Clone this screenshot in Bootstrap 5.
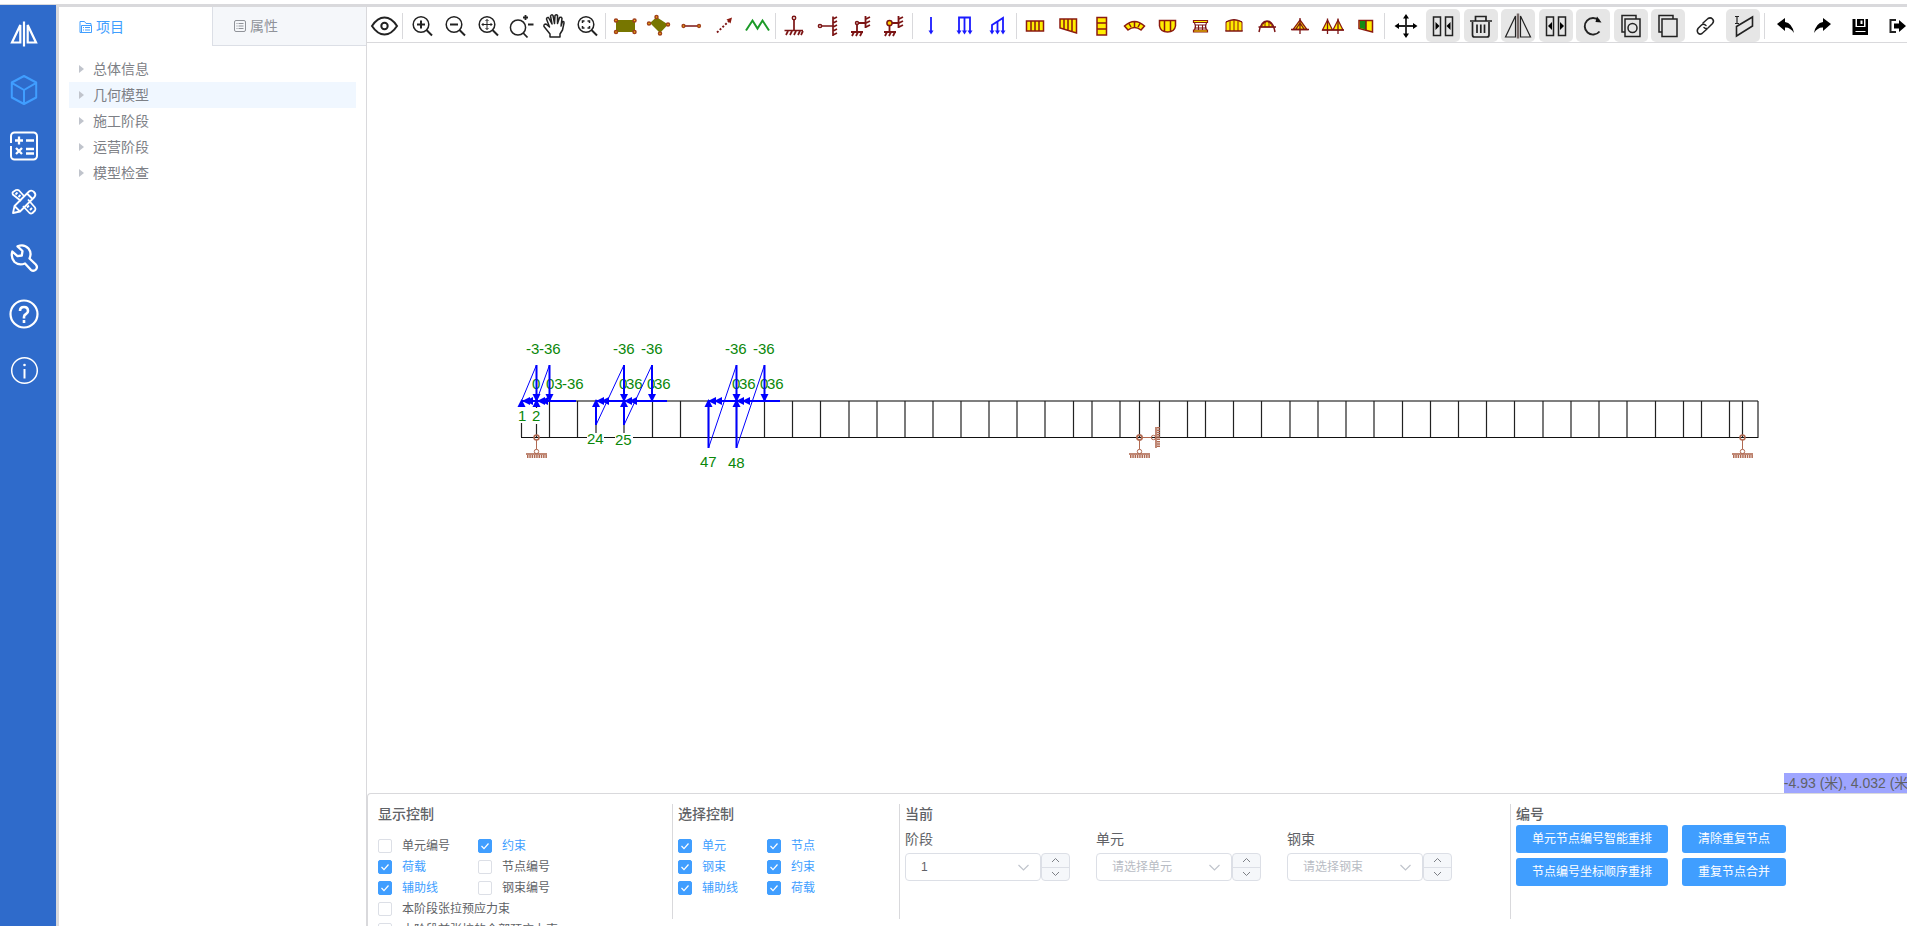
<!DOCTYPE html>
<html lang="zh-CN">
<head>
<meta charset="utf-8">
<meta name="viewport" content="width=device-width, initial-scale=1">
<title>桥梁模型</title>
<link rel="stylesheet" href="https://cdn.jsdelivr.net/npm/bootstrap@5.3.0/dist/css/bootstrap.min.css">
<style>
body{font-family:"Liberation Sans","Noto Sans CJK SC",sans-serif;font-size:14px;line-height:20px;color:#606266;background:#fff}
.topline{height:3px;margin-top:4px;background:#d9d9dc}
.body-row{min-height:0}
.side{width:56px;background:#2f6bcb;margin-top:-2px;padding-top:1px}
.side a{height:56px;padding-right:8px;color:#fff}
.side a.on{color:#409eff}
.side svg{width:32px;height:32px}
.tree{width:310px;border-left:3px solid #d9d9dc}
.tree .tabs{height:39px;display:grid;grid-template-columns:153px 1fr}
.tree .tabs button{border:0;background:#fff;color:#409eff;padding:0 20px;text-align:left}
.tree .tabs button+button{background:#f5f7fa;color:#909399;border-left:1px solid #dcdfe6;border-bottom:1px solid #dcdfe6}
.tree .tabs svg{width:14px;height:14px;margin-right:3px;flex:none}
.nodes{padding:10px}
.nodes a{height:26px;padding-left:10px;color:#7d8086;text-decoration:none}
.nodes a.on{background:#f0f7ff}
.nodes a::before{content:"";border:4px solid transparent;border-left:5px solid #c0c4cc;border-right:0;margin-right:9px}
.work{border-left:1px solid #d9d9dc}
.tools{height:36px;padding-top:2px;border-bottom:1px solid #d9d9dc}
.tools button{border:0;background:none;padding:0;width:33px;height:33px;flex:none;display:flex;align-items:center;justify-content:center}
.tools svg{width:30px;height:30px;flex:none;stroke-width:1.5}
.tools .rule{width:1px;height:26px;margin:4px 2px;background:#d9d9dc;flex:none}
.tools .wide{display:grid;flex:none;justify-items:center}
.tools .edit{width:375px;grid-template-columns:repeat(10,1fr)}
.tools .file{width:150px;grid-template-columns:repeat(4,1fr)}
.tools .wide button{width:34px;border-radius:5px}
.tools button.off{background:#e6e6e6}
.k{fill:none;stroke:#222}
.m{fill:none;stroke:#7b1414}
.y{fill:#ffee00;stroke:#8b1a10}
.o{fill:#ffc000;stroke:#a0401c}
.b{fill:none;stroke:#1a1aff}
.bf{fill:#1a1aff}
.stage{min-height:0}
.stage text{font:15px "Liberation Sans",sans-serif;fill:#0a870a}
.coord{right:-6px;bottom:0;background:#9ea5ff;color:#606266;white-space:nowrap}
.panel{height:133px;border-top:1px solid #d9d9dc;border-left:1px solid #d9d9dc;border-top-left-radius:4px;display:grid;grid-template-columns:304fr 227fr 611fr 397fr;padding-top:10px}
.panel section{height:115px;padding-left:5px}
.panel section+section{border-left:1px solid #d9d9dc}
.panel section:first-child{padding-left:10px}
.panel h2{font-size:14px;line-height:20px;margin:0}
.checks{display:grid;grid-template-columns:100px 1fr;margin-top:11px;font-size:12px}
.checks.near{grid-template-columns:89px 1fr}
.checks .all{grid-column:1/3}
.checks label{height:21px;display:flex;align-items:center;white-space:nowrap}
.checks input.form-check-input{width:14px;height:14px;margin:0 10px 0 0;border-color:#dcdfe6;border-radius:2px;flex:none}
.checks input:checked{background-color:#409eff;border-color:#409eff}
.checks input.form-check-input:checked{background-size:12px;background-image:url("data:image/svg+xml,%3Csvg xmlns='http://www.w3.org/2000/svg' viewBox='0 0 12 12'%3E%3Cpath d='M2.500 6l2.500 2.700L9.500 3.500' fill='none' stroke='%23fff' stroke-width='1.200'/%3E%3C/svg%3E")}
.checks label:has(input:checked){color:#409eff}
.field{width:165px}
.picks{gap:26px}
.field label{font-size:14px;line-height:20px;margin:5px 0 4px;display:block}
.field select{width:136px;height:28px;font-size:12px;line-height:16px;padding:0 15px;border-color:#dcdfe6;border-radius:4px;color:#606266;background-color:#fff;background-position:right 10px center;background-size:13px;background-image:url("data:image/svg+xml,%3Csvg xmlns='http://www.w3.org/2000/svg' viewBox='0 0 13 13'%3E%3Cpath d='M1.500 4l5 5 5-5' fill='none' stroke='%23c0c4cc' stroke-width='1.200'/%3E%3C/svg%3E")}
.field select.none{color:#b8bcc4}
.spin{width:29px;height:28px;border:1px solid #dcdfe6;border-radius:4px;background:#f5f7fa;overflow:hidden}
.spin button{border:0;background:none;padding:0;height:13px;display:flex;align-items:center;justify-content:center}
.spin button+button{border-top:1px solid #dcdfe6;padding-bottom:2px}
.spin svg{width:9px;height:9px;fill:none;stroke:#7d8086}
.acts{display:grid;grid-template-columns:152px 104px;column-gap:14px;row-gap:5px;margin-top:1px}
.acts .btn{height:28px;padding:0;font-size:12px;border-radius:3px;background:#409eff;border:0;color:#fff}
</style>
</head>
<body>
<div class="vh-100 d-flex flex-column overflow-hidden">
<div class="topline flex-shrink-0"></div>
<div class="body-row d-flex flex-grow-1">

<nav class="side d-flex flex-column flex-shrink-0">
<a href="#" aria-label="主页" class="d-flex align-items-center justify-content-center"><svg viewBox="0 0 32 32" fill="none" stroke="currentColor" stroke-width="2"><path d="M16 3.500V28.500M12.300 7V24.500H4zM19.700 7V24.500H28z" stroke-width="2.200"/></svg></a>
<a href="#" aria-label="模型" class="d-flex align-items-center justify-content-center on"><svg viewBox="0 0 32 32" fill="none" stroke="currentColor" stroke-width="2" stroke-linejoin="round"><path d="M16 2L28.200 8.500V23.500L16 30L3.800 23.500V8.500zM3.800 8.800L16 16L28.200 8.800M16 16V30"/></svg></a>
<a href="#" aria-label="计算" class="d-flex align-items-center justify-content-center"><svg viewBox="0 0 32 32" fill="none" stroke="currentColor" stroke-width="2"><path d="M3 13V6a3.500 3.500 0 0 1 3.500-3.500h19A3.500 3.500 0 0 1 29 6v20a3.500 3.500 0 0 1-3.500 3.500h-19A3.500 3.500 0 0 1 3 26V16"/><path d="M7 10.500h8M11 6.500v8M18 10.500h8M8 18l6 6M14 18l-6 6M18 19h8M18 23.500h8" stroke-width="2.300"/></svg></a>
<a href="#" aria-label="设计" class="d-flex align-items-center justify-content-center"><svg viewBox="0 0 32 32" fill="none" stroke="currentColor" stroke-width="1.800" stroke-linejoin="round"><path d="M13 15L4.800 8.500Q4 7 5 6L8 4Q10 3.500 11 4.500L16 10M20 13.500L27 21.500Q28 23 27 24.500L24.500 27Q23 28 21.500 27L15 20M7.500 8.500l2-2M10.500 11l2-2M19 21.500l2-2M22 24l2-2"/><path d="M5 27L6.500 20L21 5.500Q23.500 3.500 26 6T26.500 11L12 25.500zM19 7.500L24.500 13M7 20.500l4.500 4.500"/></svg></a>
<a href="#" aria-label="工具" class="d-flex align-items-center justify-content-center"><svg viewBox="0 0 32 32" fill="none" stroke="currentColor" stroke-width="2.300" stroke-linejoin="round"><path d="M9.500 4.300Q16 1.500 20.500 6.500Q24 11 21.500 16.500L27.800 22.500Q30 25 28 27.500Q25.500 29.800 22.800 27.800L17 21.500Q11 24 6.500 20Q2.500 15.500 4.300 9.500L9.500 14.200L13.800 13.500L14.500 9z"/></svg></a>
<a href="#" aria-label="帮助" class="d-flex align-items-center justify-content-center"><svg viewBox="0 0 32 32" fill="none" stroke="currentColor" stroke-width="2"><circle cx="16" cy="16" r="13.500" stroke-width="2.200"/><path d="M12 13Q12 9 16 9T20 13Q20 15 18 16T16 19V20.500M16 22v3" stroke-width="2.600"/></svg></a>
<a href="#" aria-label="关于" class="d-flex align-items-center justify-content-center"><svg viewBox="0 0 32 32" fill="none" stroke="currentColor" stroke-width="1.500"><circle cx="16.500" cy="16.500" r="12.800"/><path d="M16.500 15v9.500" stroke-width="2"/><circle cx="16.500" cy="11" r="1.300" fill="currentColor" stroke="none"/></svg></a>
</nav>

<aside class="tree flex-shrink-0">
<div class="tabs">
<button type="button" class="d-flex align-items-center"><svg viewBox="0 0 14 14" fill="none" stroke="currentColor"><path d="M1 12.500V1.500h4.500l1.500 2h5v2M1 12.500h11.500v-7H2.500V12M4 7.500h1M6 7.500h5M4 10h1M6 10h5"/></svg>项目</button>
<button type="button" class="d-flex align-items-center"><svg viewBox="0 0 14 14" fill="none" stroke="currentColor"><rect x="1.500" y="1.500" width="11" height="11" rx="1.500"/><path d="M3.500 4.500h1M5.500 4.500h5M3.500 7h1M5.500 7h5M3.500 9.500h1M5.500 9.500h5"/></svg>属性</button>
</div>
<div class="nodes d-flex flex-column">
<a href="#" class="d-flex align-items-center">总体信息</a>
<a href="#" class="d-flex align-items-center on">几何模型</a>
<a href="#" class="d-flex align-items-center">施工阶段</a>
<a href="#" class="d-flex align-items-center">运营阶段</a>
<a href="#" class="d-flex align-items-center">模型检查</a>
</div>
</aside>

<main class="work d-flex flex-column flex-grow-1 overflow-hidden">
<div class="tools d-flex flex-shrink-0 overflow-hidden">
<button aria-label="显示"><svg viewBox="0 0 30 30" class="k"><g stroke-width="2"><path d="M3 15Q8.500 6.500 15.500 6.500T28 15Q22.500 23.500 15.500 23.500T3 15z"/><circle cx="15.500" cy="15" r="3.200"/></g></svg></button>
<span class="rule"></span>
<button aria-label="放大"><svg viewBox="0 0 30 30" class="k"><circle cx="14" cy="13.500" r="7.800"/><path d="M19.500 19L25 24.500M10 13.500h8M14 9.500v8" stroke-width="2"/></svg></button>
<button aria-label="缩小"><svg viewBox="0 0 30 30" class="k"><circle cx="14" cy="13.500" r="7.800"/><path d="M19.500 19L25 24.500M10 13.500h8" stroke-width="2"/></svg></button>
<button aria-label="平移缩放"><svg viewBox="0 0 30 30" class="k"><circle cx="14" cy="13.500" r="7.800"/><path d="M19.500 19L25 24.500" stroke-width="2"/><path d="M9 13.500h10M14 8.500v10M12.500 10L14 8.500L15.500 10M12.500 17l1.500 1.500L15.500 17M10.500 12L9 13.500L10.500 15M17.500 12L19 13.500L17.500 15" stroke-width="1"/></svg></button>
<button aria-label="动态缩放"><svg viewBox="0 0 30 30" class="k"><circle cx="12" cy="16.500" r="7.600"/><path d="M17.200 22L21.500 26.500M17 6.500h5M19.500 4v5M22 13.500h5.500" stroke-width="1.800"/></svg></button>
<button aria-label="平移"><svg viewBox="0 0 30 30" class="k"><path d="M11 26V23L5 15.500Q4.500 13 7 13L10.500 16L7.500 8Q8 6 9.500 6.500L13 13L11.500 5Q12.500 3 14 4.500L15.500 12.500L16 4.500Q17.500 3 18.500 4.500V12.500L20.500 6.500Q22.500 5.500 23 7.500L22 15L23.500 10.500Q25 10 25 12L23.500 19L21 23V26z" stroke-linejoin="round"/></svg></button>
<button aria-label="全图"><svg viewBox="0 0 30 30" class="k"><circle cx="14" cy="13.500" r="7.800"/><path d="M19.500 19L25 24.500" stroke-width="2"/><path d="M10.500 12V10h2M15.500 10h2V12M10.500 15v2h2M15.500 17h2V15"/></svg></button>
<span class="rule"></span>
<button aria-label="矩形"><svg viewBox="0 0 30 30" stroke-width="1"><path d="M6 9h19v12H6z" fill="#777600"/><circle class="o" cx="6" cy="9.500" r="1.500"/><circle class="o" cx="24.500" cy="9.500" r="1.500"/><circle class="o" cx="6" cy="21" r="1.500"/><circle class="o" cx="24.500" cy="21" r="1.500"/></svg></button>
<button aria-label="多边形"><svg viewBox="0 0 30 30"><path d="M7 12L13.500 6L25 13.500L17 22z" fill="#777600"/><circle class="o" cx="6" cy="12.500" r="1.500"/><circle class="o" cx="13.500" cy="6" r="1.500"/><circle class="o" cx="25" cy="13.500" r="1.500"/><circle class="o" cx="17" cy="22.500" r="1.500"/></svg></button>
<button aria-label="线单元"><svg viewBox="0 0 30 30"><path class="m" d="M7 15h16"/><circle class="o" cx="7.500" cy="15" r="1.400"/><circle class="o" cx="23" cy="15" r="1.400"/></svg></button>
<button aria-label="矢量"><svg viewBox="0 0 30 30"><path class="m" d="M8 21.500L20 10" stroke-dasharray="2 1.800" stroke-width="1.900"/><path d="M23 6.500L17.500 8.500L21.500 12.500z" fill="#8b1a10"/></svg></button>
<button aria-label="折线"><svg viewBox="0 0 30 30"><path d="M4 19.500L10.500 9.500L15.500 17.500L20.500 9.500L27 19.500" fill="none" stroke="#1c9a28" stroke-width="2"/></svg></button>
<span class="rule"></span>
<button aria-label="竖向支座"><svg viewBox="0 0 30 30" class="m"><circle cx="14" cy="7" r="1.700"/><path d="M14 9V19.500M4.500 19.500H23M8 20l-2 4M12 20l-2 4M16 20l-2 4M20 20l-2 4M23 20l-2 4" stroke-width="1.700"/></svg></button>
<button aria-label="水平支座"><svg viewBox="0 0 30 30" class="m"><circle cx="7" cy="15" r="1.600"/><path d="M9 15H20M20 5.500V25M20 8l4-2M20 12l4-2M20 16l4-2M20 20l4-2M20 24l4-2" stroke-width="1.700"/></svg></button>
<button aria-label="双向支座"><svg viewBox="0 0 30 30" class="m"><circle cx="11" cy="12" r="1.500"/><path d="M12.500 12H20M11 13.500V21M5 21H17M8 21l-2 4M12 21l-2 4M16 21l-2 4M19.500 5v12M20 8l4-2M20 12l4-2M20 16l4-2" stroke-width="1.800"/></svg></button>
<button aria-label="固定支座"><svg viewBox="0 0 30 30" class="m"><path d="M12 12H20M10.500 13.500V21M5 21H17M8 21l-2 4M12 21l-2 4M16 21l-2 4M19.500 5v12M20 8l4-2M20 12l4-2M20 16l4-2" stroke-width="1.800"/><circle cx="10.500" cy="12" r="2.600" fill="#ffcf00"/></svg></button>
<span class="rule"></span>
<button aria-label="集中力"><svg viewBox="0 0 30 30"><path class="b" d="M14 6v15" stroke-width="1.800"/><path class="bf" d="M11.500 19.500h5L14 23.500z"/></svg></button>
<button aria-label="均布力"><svg viewBox="0 0 30 30"><path class="b" d="M9 21V6.500H20V21M14.500 6.500V21" stroke-width="1.800"/><path class="bf" d="M6.500 19.500h5L9 23.500zM12 19.500h5l-2.500 4zM17.500 19.500h5L20 23.500z"/></svg></button>
<button aria-label="梯形力"><svg viewBox="0 0 30 30"><path class="b" d="M9 21V14L20 7V21M14.500 10.500V21" stroke-width="1.800"/><path class="bf" d="M6.500 19.500h5L9 23.500zM12 19.500h5l-2.500 4zM17.500 19.500h5L20 23.500z"/></svg></button>
<span class="rule"></span>
<button aria-label="等截面梁"><svg viewBox="0 0 30 30"><path class="y" d="M5.500 10H22.500V20H5.500zM10 10V20M14 10V20M18 10V20"/></svg></button>
<button aria-label="变截面梁"><svg viewBox="0 0 30 30"><path class="y" d="M6 8H22.500V22L6 17zM10 8V18M14 8V19.500M18 8V20.500"/></svg></button>
<button aria-label="墩柱"><svg viewBox="0 0 30 30"><path class="y" d="M10 6.500H19.500V24H10zM10 12h9.500M10 18h9.500"/></svg></button>
<button aria-label="拱圈"><svg viewBox="0 0 30 30"><path class="y" d="M4.500 15Q14.500 6 24.500 15L21 19Q14.500 14 8 19zM9 12.500L11 16M14.500 11V16M20 12.500L18 16"/></svg></button>
<button aria-label="盖梁"><svg viewBox="0 0 30 30"><path class="y" d="M6.500 9.500H22.500V15Q21.500 21 14.500 21T6.500 15zM11.500 9.500V20M17.500 9.500V20"/></svg></button>
<button aria-label="框架"><svg viewBox="0 0 30 30"><path class="y" stroke-width="1.200" d="M7.500 9.500H21.500V11.500H7.500zM7.500 19H21.500V21H7.500z"/><path class="m" stroke-width="1.100" d="M8.500 12Q10.500 15.500 8.500 19M20.500 12Q18.500 15.500 20.500 19M9.500 14H19.500M9.500 17H19.500M12.500 14v5M16.500 14v5"/></svg></button>
<button aria-label="拱桥"><svg viewBox="0 0 30 30"><path class="y" d="M7 20V11Q15 7 23 11V20zM11 10V20M15 9V20M19 10V20" stroke-width="1"/><path d="M7 11Q15 6 23 11M6 20H24" class="m" stroke-width="1.200"/></svg></button>
<button aria-label="中承拱"><svg viewBox="0 0 30 30"><path class="y" d="M9 16Q15 5 21 16zM13 11v5M17 11v5" stroke-width="1"/><path class="m" d="M7 21Q9 10 15 10T23 21M6.500 16H24"/></svg></button>
<button aria-label="斜拉桥"><svg viewBox="0 0 30 30"><path class="y" d="M15 9L22 18.500H8z" stroke-width="1.300"/><path class="m" d="M15 7V23M6 18.500H24M15 12L11 18M15 12L19 18" stroke-width="1.300"/></svg></button>
<button aria-label="双塔斜拉桥"><svg viewBox="0 0 30 30"><path class="y" d="M9.500 9L14.500 19H4.500zM20 9L25 19H15z" stroke-width="1.200"/><path class="m" d="M9.500 7.500V23M20 7.500V23M4 19H26" stroke-width="1.300"/></svg></button>
<button aria-label="截面"><svg viewBox="0 0 30 30"><path class="y" d="M8 9.500H21.500V21L8 17.500z"/><path d="M9 10H15V18.500L9 17z" fill="#138a13"/><path class="m" d="M15 9.500V19"/></svg></button>
<span class="rule"></span>
<div class="wide edit">
<button aria-label="移动"><svg viewBox="0 0 30 30"><path class="k" d="M15 6V24M6 15H24" stroke-width="1.800"/><path d="M15 3L18 7.500H12zM15 27L18 22.500H12zM3.500 15L8 12V18zM26.500 15L22 12V18z"/></svg></button>
<button class="off" aria-label="合并"><svg viewBox="0 0 30 30"><path class="k" d="M5.500 6H12.500V24.500H5.500zM17.500 6H24.500V24.500H17.500z"/><path d="M7.500 11V19L11.500 15zM22.500 11V19L18.500 15z"/></svg></button>
<button class="off" aria-label="删除"><svg viewBox="0 0 30 30"><path class="k" d="M4 10H26M9.500 9.500V5.500H20V9.500M6.500 11V24Q6.500 26 8.500 26H21Q23 26 23 24V11M11 13.500V22M14.800 13.500V22M18.500 13.500V22" stroke-width="1.700"/></svg></button>
<button class="off" aria-label="镜像"><svg viewBox="0 0 30 30" class="k"><path d="M15 2.500V27.500" stroke="#766a68" stroke-width="2.500"/><path d="M12.500 5V26H2.500zM17.500 5V26H27.500z" stroke-width="1.200"/></svg></button>
<button class="off" aria-label="拆分"><svg viewBox="0 0 30 30"><path class="k" d="M5.500 6H12.500V24.500H5.500zM17.500 6H24.500V24.500H17.500z"/><path d="M11 11V19L7 15zM19 11V19L23 15z"/></svg></button>
<button class="off" aria-label="旋转"><svg viewBox="0 0 30 30"><path class="k" d="M21 9.500A8.300 8.300 0 1 0 21.500 20.500" stroke-width="1.900"/><path d="M19 5.500L23.500 11.500L17.500 11z" fill="#111"/></svg></button>
<button class="off" aria-label="复制节点"><svg viewBox="0 0 30 30" class="k"><path d="M9 21H6V4.500H20V7.500M9 8H24V25.500H9z"/><circle cx="16.500" cy="17" r="4.500"/></svg></button>
<button class="off" aria-label="复制"><svg viewBox="0 0 30 30" class="k"><path d="M9 21H6V4.500H20V7.500M9 8H24V25.500H9z"/></svg></button>
<button aria-label="链接"><svg viewBox="0 0 30 30" class="k" stroke-linecap="round"><path d="M12 12L17 7.500Q19.500 6 21.500 8T21.500 12.500L17 17Q15 18.500 13 16.500M16 18L11 22.500Q8.500 24 7 22T7 17.500L10.500 14Q12.500 12.500 15 14.500"/></svg></button>
<button class="off" aria-label="截面平面"><svg viewBox="0 0 30 30" class="k"><path d="M8.500 15.500L24.500 6V15L8.500 25z" stroke-width="1.600"/><path d="M7 5.500h4M9 5.500v7M7 12.500h4" stroke-width="1.200"/></svg></button>
</div>
<span class="rule"></span>
<div class="wide file">
<button aria-label="撤销"><svg viewBox="0 0 30 30"><path d="M6 13L14 7V11Q21 12 23 22Q19 16 14 16.500V20z"/></svg></button>
<button aria-label="重做"><svg viewBox="0 0 30 30"><path d="M23 13L15 7V11Q8 12 6 22Q10 16 15 16.500V20z"/></svg></button>
<button aria-label="保存"><svg viewBox="0 0 30 30"><path d="M6.500 8h3v8h10V8h2.500v16h-15.500zM11 8h7v7h-7z"/><path d="M14.500 9.500h2v3.500h-2zM9.500 20h10v1h-10z" fill="#fff"/></svg></button>
<button aria-label="退出"><svg viewBox="0 0 30 30"><path class="k" d="M13 9H7.500V21H13" stroke-width="2"/><path d="M11 12.500H16V9L23 15L16 21V17.500H11z"/></svg></button>
</div>
</div>

<div class="stage position-relative flex-grow-1">
<svg class="d-block w-100 h-100" viewBox="367 43 1540 750" role="img" aria-label="桥梁模型图">
<defs>
<g id="bearing" fill="none" stroke="#b06a52"><circle r="2.500" stroke-width="1.500"/><path d="M0 2V12"/><circle cy="14" r="2.200"/><path d="M-10.500 16.500H10.500" stroke-width="1.600"/><path d="M-9.500 19H10.500" stroke-width="3" stroke-dasharray="1.500 .8"/></g>
<path id="dn" d="M-4-7H4L0 1z"/><path id="up" d="M-4 6H4L0-2z"/><path id="lf" d="M7-4V4L-1 0z"/>
</defs>
<path d="M521 401H1758" stroke="#555" stroke-width="1.600"/>
<path d="M521 437.500H1758.500" stroke="#111" stroke-width="1.100"/>
<path fill="none" stroke="#222" stroke-width="1.200" d="M521.500 401v36M536.500 401v36M549.500 401v36M577.500 401v36M596 401v36M624 401v36M652.500 401v36M680.500 401v36M708.500 401v36M736.500 401v36M764.500 401v36M792.500 401v36M820.500 401v36M849 401v36M877 401v36M905 401v36M933 401v36M961 401v36M989 401v36M1017 401v36M1045 401v36M1073.500 401v36M1092 401v36M1120 401v36M1139.500 401v36M1159.500 401v36M1187.500 401v36M1205.500 401v36M1233.500 401v36M1261.500 401v36M1290 401v36M1318 401v36M1346 401v36M1374 401v36M1402.500 401v36M1430.500 401v36M1458.500 401v36M1486.500 401v36M1514.500 401v36M1543 401v36M1571 401v36M1599 401v36M1627 401v36M1655.500 401v36M1683.500 401v36M1701.500 401v36M1729.500 401v36M1742.500 401v36M1758 401v36"/>
<use href="#bearing" x="536.500" y="437.500"/><use href="#bearing" x="1139.500" y="437.500"/><use href="#bearing" x="1742.500" y="437.500"/>
<use href="#bearing" transform="translate(1139.500 437.500) rotate(-90)"/>
<path fill="#fff" d="M517 405h9v18h-9zM531 408h11v16h-11zM587 433h17v12h-17zM615 433h18v13h-18z"/>
<g>
<text x="526" y="354">-3</text><text x="539" y="354">-36</text><text x="613" y="354">-36</text><text x="641" y="354">-36</text><text x="725" y="354">-36</text><text x="753" y="354">-36</text>
<text x="532" y="389">0</text><text x="546" y="389">03</text><text x="562" y="389">-36</text><text x="619" y="389">0</text><text x="626" y="389">36</text><text x="647" y="389">0</text><text x="654" y="389">36</text><text x="732" y="389">0</text><text x="739" y="389">36</text><text x="760" y="389">0</text><text x="767" y="389">36</text>
<text x="518" y="421">1</text><text x="532" y="421">2</text><text x="587" y="444">24</text><text x="615" y="445">25</text><text x="700" y="467">47</text><text x="728" y="468">48</text>
</g>
<g stroke="#00f" fill="none"><path d="M521.500 401L536.500 365M536.500 401L549.500 365M596 425L624 365M624 425L652 365M708.500 448L736.500 365M736.500 448L764.500 365"/>
<path stroke-width="2" d="M521 401H576M596 401H667M708 401H780M536.500 365V401M549.500 365V401M624 365V425M652 365V401M596 401V425M708.500 401V448M736.500 365V448M764.500 365V401"/></g>
<g fill="#00f"><use href="#dn" x="536.500" y="401"/><use href="#dn" x="549.500" y="401"/><use href="#dn" x="624" y="401"/><use href="#dn" x="652" y="401"/><use href="#dn" x="736.500" y="401"/><use href="#dn" x="764.500" y="401"/>
<use href="#up" x="521.500" y="401"/><use href="#up" x="536.500" y="401"/><use href="#up" x="596" y="401"/><use href="#up" x="624" y="401"/><use href="#up" x="708.500" y="401"/><use href="#up" x="736.500" y="401"/>
<use href="#lf" x="523" y="401"/><use href="#lf" x="526" y="401"/><use href="#lf" x="538" y="401"/><use href="#lf" x="541" y="401"/><use href="#lf" x="597" y="401"/><use href="#lf" x="602" y="401"/><use href="#lf" x="625" y="401"/><use href="#lf" x="630" y="401"/><use href="#lf" x="709" y="401"/><use href="#lf" x="715" y="401"/><use href="#lf" x="737" y="401"/><use href="#lf" x="743" y="401"/></g>
</svg>
<div class="coord position-absolute">-4.93 (米), 4.032 (米)</div>
</div>

<div class="panel flex-shrink-0 overflow-hidden">
<section>
<h2>显示控制</h2>
<div class="checks">
<label><input class="form-check-input" type="checkbox">单元编号</label><label><input class="form-check-input" type="checkbox" checked>约束</label>
<label><input class="form-check-input" type="checkbox" checked>荷载</label><label><input class="form-check-input" type="checkbox">节点编号</label>
<label><input class="form-check-input" type="checkbox" checked>辅助线</label><label><input class="form-check-input" type="checkbox">钢束编号</label>
<label class="all"><input class="form-check-input" type="checkbox">本阶段张拉预应力束</label>
<label class="all"><input class="form-check-input" type="checkbox">本阶段前张拉的全部预应力束</label>
</div>
</section>
<section>
<h2>选择控制</h2>
<div class="checks near">
<label><input class="form-check-input" type="checkbox" checked>单元</label><label><input class="form-check-input" type="checkbox" checked>节点</label>
<label><input class="form-check-input" type="checkbox" checked>钢束</label><label><input class="form-check-input" type="checkbox" checked>约束</label>
<label><input class="form-check-input" type="checkbox" checked>辅助线</label><label><input class="form-check-input" type="checkbox" checked>荷载</label>
</div>
</section>
<section>
<h2>当前</h2>
<div class="picks d-flex">
<div class="field"><label for="stage">阶段</label><div class="d-flex"><select id="stage" class="form-select"><option>1</option></select><div class="spin d-flex flex-column"><button aria-label="增加"><svg viewBox="0 0 9 9"><path d="M1 6l3.500-3.500L8 6"/></svg></button><button aria-label="减少"><svg viewBox="0 0 9 9"><path d="M1 3l3.500 3.500L8 3"/></svg></button></div></div></div>
<div class="field"><label for="unit">单元</label><div class="d-flex"><select id="unit" class="form-select none"><option>请选择单元</option></select><div class="spin d-flex flex-column"><button aria-label="增加"><svg viewBox="0 0 9 9"><path d="M1 6l3.500-3.500L8 6"/></svg></button><button aria-label="减少"><svg viewBox="0 0 9 9"><path d="M1 3l3.500 3.500L8 3"/></svg></button></div></div></div>
<div class="field"><label for="tendon">钢束</label><div class="d-flex"><select id="tendon" class="form-select none"><option>请选择钢束</option></select><div class="spin d-flex flex-column"><button aria-label="增加"><svg viewBox="0 0 9 9"><path d="M1 6l3.500-3.500L8 6"/></svg></button><button aria-label="减少"><svg viewBox="0 0 9 9"><path d="M1 3l3.500 3.500L8 3"/></svg></button></div></div></div>
</div>
</section>
<section>
<h2>编号</h2>
<div class="acts">
<button type="button" class="btn btn-primary">单元节点编号智能重排</button><button type="button" class="btn btn-primary">清除重复节点</button>
<button type="button" class="btn btn-primary">节点编号坐标顺序重排</button><button type="button" class="btn btn-primary">重复节点合并</button>
</div>
</section>
</div>
</main>
</div>
</div>
<script src="https://cdn.jsdelivr.net/npm/bootstrap@5.3.0/dist/js/bootstrap.bundle.min.js"></script>
</body>
</html>
